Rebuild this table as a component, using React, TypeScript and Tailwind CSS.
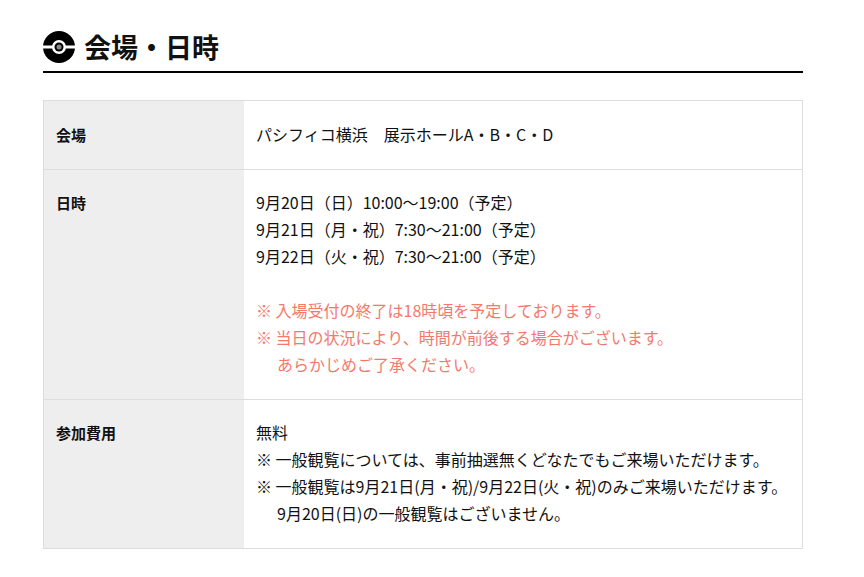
const font = "font-['Noto_Sans_CJK_JP','Noto_Sans',sans-serif]";

function BallIcon() {
  return (
    <svg width="32" height="32" viewBox="0 0 32 32" className="shrink-0">
      <circle cx="16" cy="16" r="16" fill="#000" />
      <rect x="0" y="14.5" width="32" height="3" fill="#fff" />
      <circle cx="16" cy="16" r="7" fill="#fff" />
      <circle cx="16" cy="16" r="4.5" fill="#000" />
      <circle cx="16" cy="16" r="2.5" fill="#888" />
    </svg>
  );
}

function Note({ children, red }: { children: React.ReactNode; red?: boolean }) {
  return (
    <p className={`pl-[21px] -indent-[21px] ${red ? "text-[#f4796c]" : ""}`}>
      ※ {children}
    </p>
  );
}

function Row({
  label,
  children,
  pad = "pt-[19px] pb-[21px]",
}: {
  label: string;
  children: React.ReactNode;
  pad?: string;
}) {
  return (
    <div className="flex border-b border-[#dddddd] last:border-b-0">
      <div className={`w-[200px] shrink-0 bg-[#eeeeee] px-[12px] ${pad} text-[15px] font-bold leading-[27px]`}>
        {label}
      </div>
      <div className={`flex-1 px-[12px] ${pad} text-[16px] leading-[27px]`}>{children}</div>
    </div>
  );
}

export default function App() {
  return (
    <div className={`${font} min-h-[577px] bg-white text-[#111] pl-[43px] pr-[61px] pt-[31px]`}>
      <h2 className="flex items-center gap-[9px] border-b-2 border-black pb-[8px] text-[27px] font-bold leading-[32px]">
        <BallIcon />
        <span>会場・日時</span>
      </h2>
      <div className="mt-[27px] border border-[#dddddd]">
        <Row label="会場" pad="pt-[20px] pb-[21px]">
          <p>パシフィコ横浜　展示ホールA・B・C・D</p>
        </Row>
        <Row label="日時">
          <p>9月20日（日）10:00〜19:00（予定）</p>
          <p>9月21日（月・祝）7:30〜21:00（予定）</p>
          <p>9月22日（火・祝）7:30〜21:00（予定）</p>
          <div className="h-[27px]" />
          <Note red>入場受付の終了は18時頃を予定しております。</Note>
          <Note red>
            当日の状況により、時間が前後する場合がございます。
            <br />
            あらかじめご了承ください。
          </Note>
        </Row>
        <Row label="参加費用">
          <p>無料</p>
          <Note>一般観覧については、事前抽選無くどなたでもご来場いただけます。</Note>
          <Note>
            一般観覧は9月21日(月・祝)/9月22日(火・祝)のみご来場いただけます。
            <br />
            9月20日(日)の一般観覧はございません。
          </Note>
        </Row>
      </div>
    </div>
  );
}
